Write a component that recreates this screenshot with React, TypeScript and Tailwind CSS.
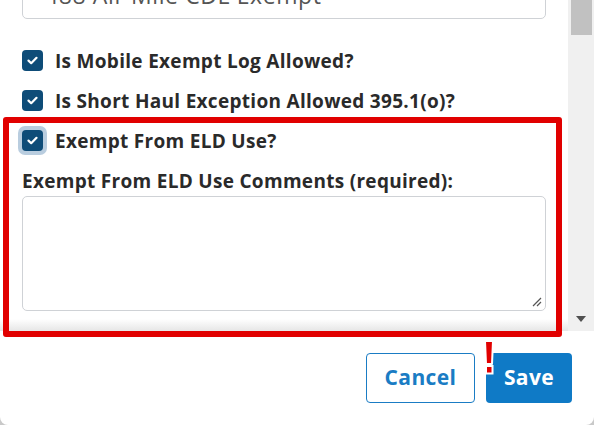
import React from 'react';

const font = { fontFamily: '"Open Sans", "Liberation Sans", Arial, sans-serif' };

function Check({ focus = false }: { focus?: boolean }) {
  const box = (
    <span className="flex h-[21px] w-[21px] items-center justify-center rounded-[4px] bg-[#0e4c78]">
      <svg width="11" height="9" viewBox="0 0 11 9" fill="none">
        <path d="M1.5 4.6 4.2 7.2 9.5 1.8" stroke="#fff" strokeWidth="2.2" strokeLinecap="round" strokeLinejoin="round" />
      </svg>
    </span>
  );
  if (!focus) return box;
  return (
    <span className="-m-[4px] flex rounded-[7px] bg-[#b9cddf] p-[4px]">{box}</span>
  );
}

function CheckRow({ label, focus }: { label: string; focus?: boolean }) {
  return (
    <label className="flex h-[21px] items-center gap-[12px]">
      <Check focus={focus} />
      <span className="mt-[2px] text-[19px] font-bold leading-[21px] tracking-[0.3px] text-[#2a2a2a]">{label}</span>
    </label>
  );
}

export default function App() {
  return (
    <div className="h-[425px] w-[594px] overflow-hidden bg-[#c9c9c9]" style={font}>
      <div className="relative flex h-[425px] flex-col rounded-b-[8px] bg-white">
        {/* scroll area */}
        <div className="flex h-[331px]">
          <div className="relative flex-1 overflow-hidden">
            <div className="-mt-[26px] flex flex-col px-[22px]">
              <div className="flex h-[45px] items-start rounded-[5px] border border-[#cfd2d6] px-[22px] text-[23px] leading-[26px] tracking-[0.6px] text-[#555]">
                <span className="mt-[7px]">488 Air Mile CDL Exempt</span>
              </div>
              <div className="mt-[31px] flex flex-col gap-[19px]">
                <CheckRow label="Is Mobile Exempt Log Allowed?" />
                <CheckRow label="Is Short Haul Exception Allowed 395.1(o)?" />
                <CheckRow label="Exempt From ELD Use?" focus />
              </div>
              <div className="mt-[20px] text-[19px] font-bold leading-[20px] tracking-[0.3px] text-[#2a2a2a]">
                Exempt From ELD Use Comments (required):
              </div>
              <div className="relative mt-[5px] h-[115px] rounded-[5px] border border-[#cfd2d6]">
                <svg className="absolute bottom-[3px] right-[3px]" width="10" height="10" viewBox="0 0 10 10">
                  <path d="M1 9 9 1M5 9 9 5" stroke="#555" strokeWidth="1.2" />
                </svg>
              </div>
            </div>
            <div className="absolute inset-x-0 bottom-0 h-[12px] bg-gradient-to-b from-transparent to-[#e6e6e6]" />
          </div>
          {/* scrollbar */}
          <div className="flex w-[26px] flex-col items-center bg-[#f0f0f0]">
            <div className="h-[35px] w-[21px] bg-[#c1c1c1]" />
            <div className="flex-1" />
            <svg className="mb-[9px]" width="10" height="6" viewBox="0 0 10 6">
              <path d="M0 0h10L5 6z" fill="#505050" />
            </svg>
          </div>
        </div>

        {/* footer */}
        <div className="flex flex-1 items-start justify-end gap-[11px] pr-[22px] pt-[22px]">
          <button className="h-[50px] w-[109px] rounded-[4px] border border-[#1a7cc4] text-[21px] font-bold tracking-[0.4px] text-[#1a7cc4]">
            Cancel
          </button>
          <button className="h-[50px] w-[86px] rounded-[4px] bg-[#0f7ac6] text-[21px] font-bold tracking-[0.4px] text-white">
            Save
          </button>
        </div>

        {/* annotation box */}
        <div className="pointer-events-none absolute left-[3px] top-[117px] h-[220px] w-[559px] rounded-[3px] border-[6px] border-[#e10000]" />
        <svg className="pointer-events-none absolute left-[482px] top-[339px]" width="14" height="37" viewBox="0 0 14 37">
          <path d="M3 2h8l-1 23H4z" fill="#e10000" stroke="#fff" strokeWidth="2" strokeLinejoin="round" />
          <rect x="4" y="27" width="6.5" height="7.5" fill="#e10000" stroke="#fff" strokeWidth="2" />
        </svg>
      </div>
    </div>
  );
}
